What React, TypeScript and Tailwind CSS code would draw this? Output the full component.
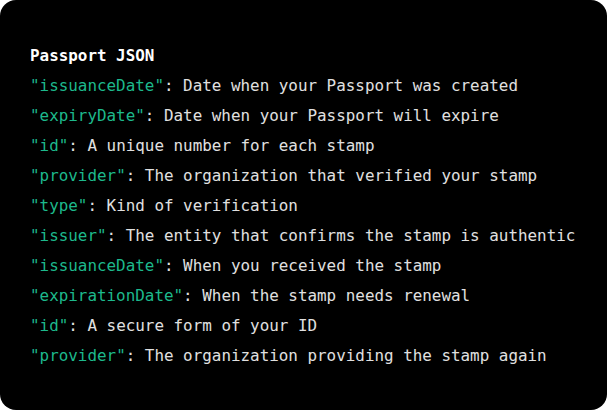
const rows: [string, string][] = [
  ["issuanceDate", "Date when your Passport was created"],
  ["expiryDate", "Date when your Passport will expire"],
  ["id", "A unique number for each stamp"],
  ["provider", "The organization that verified your stamp"],
  ["type", "Kind of verification"],
  ["issuer", "The entity that confirms the stamp is authentic"],
  ["issuanceDate", "When you received the stamp"],
  ["expirationDate", "When the stamp needs renewal"],
  ["id", "A secure form of your ID"],
  ["provider", "The organization providing the stamp again"],
];

export default function App() {
  return (
    <div className="w-[607px] h-[410px] bg-white">
      <div
        className="h-full w-full rounded-[16px] bg-black px-[30px] pt-[41px] text-[15.9px] leading-[30px] text-[#e0e0e0] whitespace-pre"
        style={{ fontFamily: '"DejaVu Sans Mono", "Liberation Mono", monospace' }}
      >
        <div className="font-bold text-white">Passport JSON</div>
        {rows.map(([key, desc], i) => (
          <div key={i}>
            <span className="text-[#1db98c]">"{key}"</span>: {desc}
          </div>
        ))}
      </div>
    </div>
  );
}
